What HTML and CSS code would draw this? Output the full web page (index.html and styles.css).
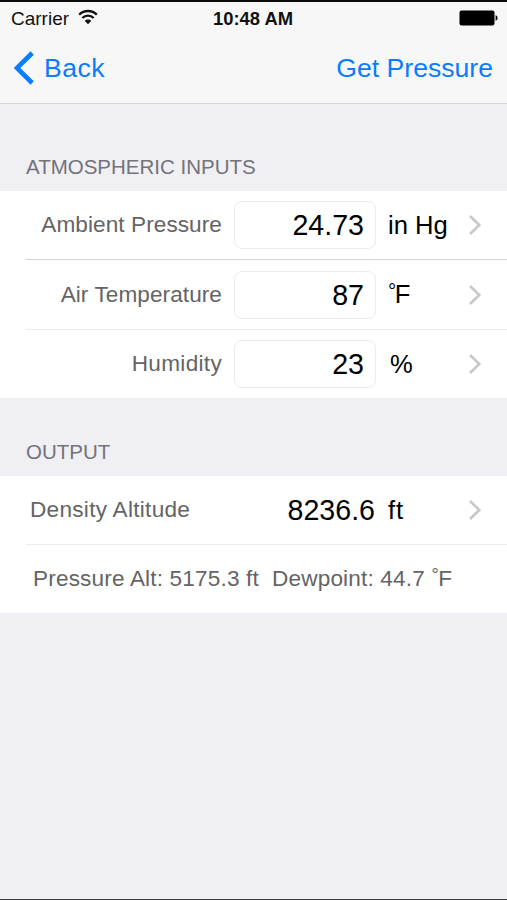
FILE: index.html
```html
<!DOCTYPE html>
<html lang="en">
<head>
  <meta charset="UTF-8" />
  <meta name="viewport" content="width=device-width, initial-scale=1.0"/>
  <title>Density Altitude</title>
  <link rel="stylesheet" href="styles.css">
</head>
<body>
  <header>
    <div class="status">
      <span class="carrier">Carrier</span>
      <svg class="wifi" width="20" height="16" viewBox="0 0 20 16">
        <path d="M1.2 5.6A12.5 12.5 0 0 1 18.8 5.6M4.3 9A8.1 8.1 0 0 1 15.7 9" fill="none" stroke="#111" stroke-width="2.3"/>
        <path d="M6.7 11.8A4.7 4.7 0 0 1 13.3 11.8L10 15.2Z" fill="#111"/>
      </svg>
      <span class="time">10:48 AM</span>
      <svg class="battery" width="39" height="16" viewBox="0 0 39 16">
        <rect x="0.5" y="0.5" width="35" height="15" rx="2" fill="#000"/>
        <path d="M36.6 5Q38.6 6 38.6 8T36.6 11Z" fill="#000"/>
      </svg>
    </div>
    <nav>
      <a class="back">
        <svg width="20" height="34" viewBox="0 0 20 34">
          <path d="M18.2 2L3 17L18.2 32" fill="none" stroke="#0a7cff" stroke-width="4.6"/>
        </svg>
        <span>Back</span>
      </a>
      <a class="action">Get Pressure</a>
    </nav>
  </header>

  <h2>ATMOSPHERIC INPUTS</h2>
  <div class="group">
    <div class="row first">
      <label>Ambient Pressure</label>
      <div class="field">24.73</div>
      <span class="unit">in Hg</span>
      <svg class="chevron" width="14" height="22" viewBox="0 0 14 22"><path d="M2 2L11.3 11L2 20" fill="none" stroke="#c7c7cc" stroke-width="2.6"/></svg>
    </div>
    <div class="row second">
      <label>Air Temperature</label>
      <div class="field">87</div>
      <span class="unit"><sup>°</sup>F</span>
      <svg class="chevron" width="14" height="22" viewBox="0 0 14 22"><path d="M2 2L11.3 11L2 20" fill="none" stroke="#c7c7cc" stroke-width="2.6"/></svg>
    </div>
    <div class="row">
      <label class="humidity">Humidity</label>
      <div class="field">23</div>
      <span class="unit percent">%</span>
      <svg class="chevron" width="14" height="22" viewBox="0 0 14 22"><path d="M2 2L11.3 11L2 20" fill="none" stroke="#c7c7cc" stroke-width="2.6"/></svg>
    </div>
  </div>

  <h2 class="output">OUTPUT</h2>
  <div class="group">
    <div class="row first">
      <span class="name">Density Altitude</span>
      <span class="result">8236.6</span>
      <span class="unit feet">ft</span>
      <svg class="chevron" width="14" height="22" viewBox="0 0 14 22"><path d="M2 2L11.3 11L2 20" fill="none" stroke="#c7c7cc" stroke-width="2.6"/></svg>
    </div>
    <div class="row summary">
      <span class="alt">Pressure Alt: 5175.3 ft</span>
      <span class="dew">Dewpoint: 44.7 <sup>°</sup>F</span>
    </div>
  </div>
</body>
</html>
```
FILE: styles.css
```css
* {
  box-sizing: border-box;
}
body {
  margin: 0;
  height: 900px;
  overflow: hidden;
  background: #efeff4;
  font-family: "Liberation Sans", Arial, sans-serif;
  border-bottom: 1px solid #3c3c3e;
}
header {
  height: 104px;
  background: #f7f7f8;
  border-top: 2px solid #0c0a0b;
  border-bottom: 1px solid #d6d6da;
}
.status {
  display: grid;
  grid-template-columns: 67px 135px 1fr 48px;
  align-items: center;
  height: 32px;
  padding-left: 11px;
  font-size: 19px;
  color: #111;
}
.carrier {
  padding-top: 1px;
}
.wifi {
  margin-top: -3px;
}
.time {
  padding-top: 1px;
  font-size: 18.4px;
  font-weight: bold;
}
nav {
  display: flex;
  justify-content: space-between;
  height: 68px;
  padding: 0 14px;
  align-items: center;
  font-size: 26.6px;
  color: #0a7cff;
}
.back {
  display: flex;
  align-items: center;
  gap: 10px;
  letter-spacing: 0.5px;
}
h2 {
  height: 87px;
  margin: 0;
  padding: 51px 26px 0;
  font-size: 20.5px;
  line-height: 24px;
  font-weight: normal;
  color: #737378;
}
.output {
  height: 78px;
  padding-top: 42px;
}
.group {
  background: #fff;
}
.row {
  display: flex;
  align-items: center;
  height: 69px;
  margin-left: 26px;
  padding-right: 25px;
}
.row + .row {
  border-top: 1px solid #ececee;
}
.first {
  height: 68px;
}
.first + .second {
  height: 70px;
  border-top-color: #d4d4d6;
}
label {
  width: 196px;
  text-align: right;
}
label, .name, .summary {
  font-size: 22.6px;
  letter-spacing: 0.07px;
  color: #646464;
}
label.humidity {
  letter-spacing: 0.3px;
}
.field {
  width: 142px;
  height: 48px;
  margin-left: 12px;
  padding-right: 11px;
  border: 1px solid #ebebed;
  border-radius: 8px;
  line-height: 47px;
  text-align: right;
}
.field, .result {
  font-size: 28.6px;
  color: #000;
}
.unit {
  margin-left: 12px;
  font-size: 25.6px;
}
.percent {
  margin-left: 14px;
}
.feet {
  letter-spacing: 0.8px;
}
.chevron {
  margin-left: auto;
}
sup {
  font-size: 0.8em;
  line-height: 0;
  vertical-align: 5px;
  letter-spacing: -1.5px;
}
.name {
  width: 180px;
  padding-left: 4px;
  letter-spacing: 0.28px;
}
.result {
  width: 170px;
  padding-right: 1px;
  text-align: right;
}
.summary {
  padding-left: 7px;
  gap: 13px;
  letter-spacing: 0.16px;
}
.summary sup {
  letter-spacing: -0.5px;
}
```
